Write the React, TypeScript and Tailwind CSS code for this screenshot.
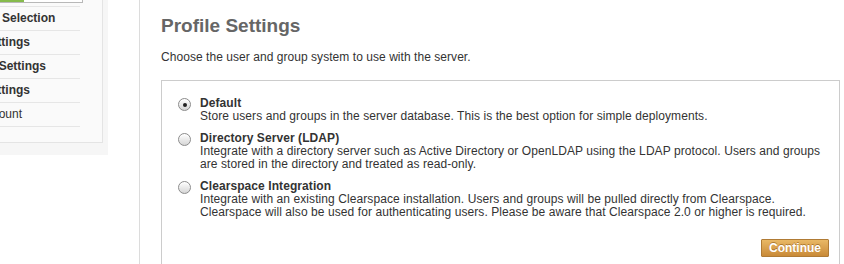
import React from 'react';

const STEPS = [
  { label: 'Language Selection', bold: true },
  { label: 'Server Settings', bold: true },
  { label: 'Database Settings', bold: true },
  { label: 'Profile Settings', bold: true },
  { label: 'Admin Account', bold: false },
];

const OPTIONS = [
  {
    id: 'default',
    title: 'Default',
    text: 'Store users and groups in the server database. This is the best option for simple deployments.',
  },
  {
    id: 'ldap',
    title: 'Directory Server (LDAP)',
    text: 'Integrate with a directory server such as Active Directory or OpenLDAP using the LDAP protocol. Users and groups are stored in the directory and treated as read-only.',
  },
  {
    id: 'clearspace',
    title: 'Clearspace Integration',
    text: 'Integrate with an existing Clearspace installation. Users and groups will be pulled directly from Clearspace. Clearspace will also be used for authenticating users. Please be aware that Clearspace 2.0 or higher is required.',
  },
];

function Radio({ checked }: { checked: boolean }) {
  return (
    <span className="mt-[2px] flex h-[13px] w-[13px] shrink-0 items-center justify-center rounded-full border border-[#8c8c8c] bg-gradient-to-b from-white to-[#d6d6d6] shadow-[inset_0_1px_1px_rgba(255,255,255,0.9)]">
      {checked && <span className="h-[4px] w-[4px] rounded-full bg-[#222]" />}
    </span>
  );
}

function Sidebar() {
  return (
    <div className="w-[140px] shrink-0 border-r border-[#dcdcdc] bg-white">
      <div className="w-[108px] bg-[#f6f6f6] pb-[12px]">
        <div className="w-[103px] border-r border-b border-[#e4e4e4] bg-[#fafafa] pb-[15px]">
          {/* progress */}
          <div className="flex h-[3px] w-[83px] border-r border-b border-[#b8b8b8] bg-white">
            <div className="w-[24px] bg-[#86bb4c]" />
          </div>
          <ul className="mt-[3px] w-[80px] border-t border-[#e6e6e6]">
            {STEPS.map((s) => (
              <li
                key={s.label}
                className={`ml-[-58px] h-[24px] whitespace-nowrap border-b border-[#e6e6e6] text-[12px] leading-[23px] text-[#333] ${
                  s.bold ? 'font-bold' : 'font-normal'
                }`}
              >
                {s.label}
              </li>
            ))}
          </ul>
        </div>
      </div>
    </div>
  );
}

export default function App() {
  return (
    <div
      className="flex h-[264px] w-[844px] overflow-hidden bg-white text-[#333]"
      style={{ fontFamily: '"Liberation Sans", Arial, sans-serif' }}
    >
      <Sidebar />
      <main className="flex-1 pl-[21px] pr-[4px] pt-[15px]">
        <h1 className="text-[19px] font-bold leading-[22px] text-[#666]">Profile Settings</h1>
        <p className="mt-[13px] text-[12px] leading-[14px] tracking-[0.05px] text-[#333]">
          Choose the user and group system to use with the server.
        </p>
        <div className="mt-[16px] flex flex-col border border-[#cccccc] bg-white pb-[24px] pl-[16px] pr-[10px] pt-[15px]">
          {OPTIONS.map((o, i) => (
            <div key={o.id} className="mb-[8px] flex gap-[9px]">
              <Radio checked={i === 0} />
              <div className="text-[12px] tracking-[0.08px]">
                <div className="font-bold leading-[14px] text-[#333]">{o.title}</div>
                <div className="leading-[13px] text-[#333]">{o.text}</div>
              </div>
            </div>
          ))}
          <button className="mt-[12px] self-end rounded-[1px] border border-[#b07b35] bg-gradient-to-b from-[#e9b865] to-[#c98a37] px-[7px] text-[12px] font-bold leading-[16px] text-white [text-shadow:0_-1px_0_rgba(120,70,10,0.5)]">
            Continue
          </button>
        </div>
      </main>
    </div>
  );
}
